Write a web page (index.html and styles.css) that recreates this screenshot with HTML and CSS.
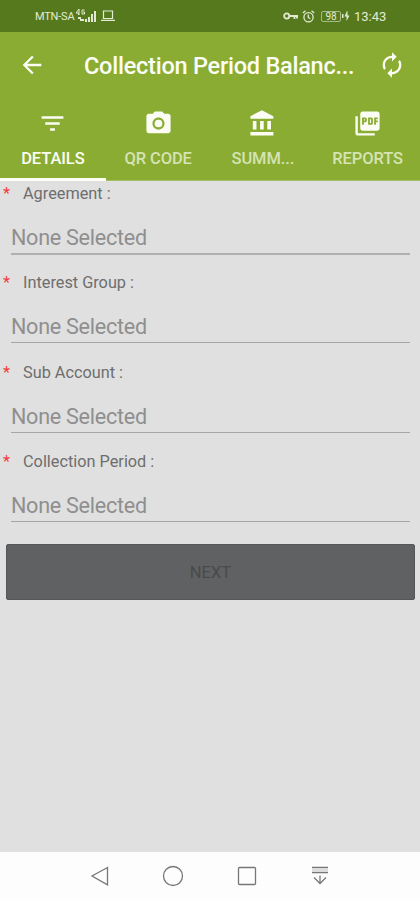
FILE: index.html
```
<!DOCTYPE html>
<html lang="en">
<head>
<meta charset="utf-8">
<title>Collection Period Balance</title>
<link rel="stylesheet" href="styles.css">
</head>
<body>
<div class="screen">
  <div class="status">
    <span class="carrier">MTN-SA</span>
    <svg class="signal" width="22" height="14" viewBox="0 0 22 14" fill="currentColor"><path d="M3 0L0 4h2.500v2M3 0v6" fill="none" stroke="currentColor"/><path d="M8.500 1H6v4h2.500V3H7" fill="none" stroke="currentColor"/><path d="M2 8h3v2H2zM4 10h4v2H4zM9 10h2v3H9zM12 8h2v5h-2zM15 5h2v8h-2zM18 2h2v11h-2z"/></svg>
    <svg class="laptop" width="14" height="12" viewBox="0 0 14 12" fill="none" stroke="currentColor" stroke-width="1.200"><path d="M2.500 1h9v7.500h-9zM0 10.300h14"/></svg>
    <svg class="key" width="16" height="10" viewBox="0 0 16 10" fill="none" stroke="currentColor" stroke-width="1.800"><circle cx="3.700" cy="5" r="2.600"/><path d="M6.500 5H15M11.500 5v3M14 5v2.500"/></svg>
    <svg class="alarm" width="13" height="13" viewBox="0 0 13 13" fill="none" stroke="currentColor" stroke-width="1.300"><circle cx="6.500" cy="7.200" r="4.600"/><path d="M6.300 4.500v3l2 1.200M.8 3L3.500.8M12.200 3L9.500.8"/></svg>
    <span class="battery">98</span>
    <svg class="bolt" width="8" height="10" viewBox="0 0 8 10" fill="currentColor"><path d="M0 3h1.500v4H0zM5 0L2.500 5.500h2V10L7.500 4.500h-2V0z"/></svg>
    <span class="clock">13:43</span>
  </div>
  <div class="toolbar">
    <svg class="back" width="28" height="28" viewBox="0 0 24 24" fill="currentColor"><path d="M20 11H7.830l5.590-5.590L12 4l-8 8 8 8 1.410-1.410L7.830 13H20v-2z"/></svg>
    <h1 class="title">Collection Period Balanc...</h1>
    <svg class="refresh" width="28" height="28" viewBox="0 0 24 24" fill="currentColor"><path d="M12 6v3l4-4-4-4v3c-4.420 0-8 3.580-8 8 0 1.570.46 3.030 1.240 4.260L6.700 14.800c-.45-.83-.7-1.790-.7-2.800 0-3.310 2.690-6 6-6zm6.760 1.740L17.300 9.200c.44.840.7 1.790.7 2.800 0 3.310-2.690 6-6 6v-3l-4 4 4 4v-3c4.420 0 8-3.580 8-8 0-1.570-.46-3.030-1.240-4.260z"/></svg>
  </div>
  <div class="tabs">
    <div class="tab active">
      <svg width="29" height="29" viewBox="0 0 24 24" fill="currentColor"><path d="M10 18h4v-2h-4v2zM3 6v2h18V6H3zm3 7h12v-2H6v2z"/></svg>
      <span class="name">DETAILS</span>
    </div>
    <div class="tab">
      <svg width="29" height="29" viewBox="0 0 24 24" fill="currentColor"><circle cx="12" cy="12" r="3.200"/><path d="M9 2L7.170 4H4c-1.100 0-2 .9-2 2v12c0 1.100.9 2 2 2h16c1.100 0 2-.9 2-2V6c0-1.100-.9-2-2-2h-3.170L15 2H9zm3 15c-2.760 0-5-2.240-5-5s2.240-5 5-5 5 2.240 5 5-2.240 5-5 5z"/></svg>
      <span class="name">QR CODE</span>
    </div>
    <div class="tab">
      <svg width="29" height="29" viewBox="0 0 24 24" fill="currentColor"><path d="M4 10v7h3v-7H4zm6 0v7h3v-7h-3zM2 22h19v-3H2v3zm14-12v7h3v-7h-3zm-4.500-9L2 6v2h19V6l-9.500-5z"/></svg>
      <span class="name">SUMM...</span>
    </div>
    <div class="tab">
      <svg width="29" height="29" viewBox="0 0 24 24" fill="currentColor"><path d="M20 2H8c-1.100 0-2 .9-2 2v12c0 1.100.9 2 2 2h12c1.100 0 2-.9 2-2V4c0-1.100-.9-2-2-2zm-8.500 7.500c0 .83-.67 1.500-1.500 1.500H9v2H7.500V7H10c.83 0 1.500.67 1.500 1.500v1zm5 2c0 .83-.67 1.500-1.500 1.500h-2.500V7H15c.83 0 1.500.67 1.500 1.500v3zm4-3H19v1h1.500V11H19v2h-1.500V7h3v1.500zM9 9.500h1v-1H9v1zM4 6H2v14c0 1.100.9 2 2 2h14v-2H4V6zm10 5.500h1v-3h-1v3z"/></svg>
      <span class="name">REPORTS</span>
    </div>
  </div>
  <div class="form">
    <div class="field focus"><div class="label"><span class="star">*</span><span>Agreement :</span></div><div class="value">None Selected</div></div>
    <div class="field"><div class="label"><span class="star">*</span><span>Interest Group :</span></div><div class="value">None Selected</div></div>
    <div class="field"><div class="label"><span class="star">*</span><span>Sub Account :</span></div><div class="value">None Selected</div></div>
    <div class="field"><div class="label"><span class="star">*</span><span>Collection Period :</span></div><div class="value">None Selected</div></div>
    <div class="next">NEXT</div>
  </div>
  <div class="nav">
    <svg width="24" height="24" viewBox="0 0 24 24"><path d="M19.500 3.500v17.300L4 12z"/></svg>
    <svg width="24" height="24" viewBox="0 0 24 24"><circle cx="12" cy="12" r="9.500"/></svg>
    <svg width="24" height="24" viewBox="0 0 24 24"><rect x="3.500" y="3.500" width="17" height="17" rx="1"/></svg>
    <svg width="24" height="24" viewBox="0 0 24 24"><path d="M4 3.500h16M4 8.500h16M12 11.500v8.500M6 13.500l6 6 6-6"/><path class="faint" d="M4 6h16"/></svg>
  </div>
</div>
</body>
</html>
```

FILE: styles.css
```
* { box-sizing: border-box; }
body { margin: 0; font-family: Roboto, "Liberation Sans", sans-serif; }
svg { display: block; flex: none; }
.screen { width: 420px; height: 900px; display: flex; flex-direction: column; background: #e0e0e0; overflow: hidden; }
.status { height: 32px; flex: none; display: flex; align-items: center; padding-left: 35px; background: #56791e; color: #e2ebd2; font-size: 11px; white-space: nowrap; }
.carrier { width: 40px; letter-spacing: -0.2px; }
.signal { margin-left: 1px; }
.laptop { margin-left: 3px; }
.key { margin-left: 168px; }
.alarm { margin-left: 3px; }
.battery { margin-left: 6px; width: 20px; height: 11px; border: 1px solid #a8bc88; border-radius: 2px; font-size: 10px; line-height: 9px; text-align: center; }
.bolt { margin-left: 1px; }
.clock { margin-left: 4px; font-size: 13px; }
.toolbar { height: 66px; flex: none; display: flex; align-items: center; padding: 0 14px 0 18px; background: #8aac33; color: #fbfdf4; }
.title { margin: 2px 0 0 38px; width: 295px; font-size: 23.500px; letter-spacing: -0.24px; font-weight: 500; line-height: 30px; white-space: nowrap; }
.tabs { height: 83px; flex: none; display: flex; background: #8aac33; color: #fbfdf4; }
.tab { width: 105px; padding-top: 11px; display: flex; flex-direction: column; align-items: center; border-bottom: 1px solid #a5be67; }
.tab.active { width: 106px; border-bottom: 3px solid #fdfff5; }
.name { margin-top: 11px; font-size: 16.500px; letter-spacing: -0.1px; line-height: 20px; font-weight: 500; color: #d6e3b3; }
.active .name { color: #fbfdf4; }
.form { flex: 1; padding: 2px 5px 0 3px; }
.field { height: 89.300px; }
.label { display: flex; height: 22px; line-height: 22px; font-size: 16.300px; color: #6e6e6e; }
.star { width: 20px; color: #f33b3b; }
.value { margin: 10px 5px 0 8px; height: 39px; line-height: 46px; font-size: 21.600px; letter-spacing: -0.28px; color: #8f8f8f; border-bottom: 1px solid #a6a6a6; }
.focus .value { border-bottom: 2px solid #b0b0b0; height: 40px; }
.next { margin: 4px 0 0 3px; height: 56px; line-height: 56px; border: 1px solid #545657; border-radius: 2px; text-align: center; font-size: 16.500px; background: #606162; color: #494a4b; }
.nav { height: 48px; flex: none; display: flex; gap: 49.300px; align-items: center; padding-left: 88px; background: #fdfdfd; }
.nav svg { fill: none; stroke: #777; stroke-width: 1.300; }
.nav .faint { stroke: #ccc; }
```
